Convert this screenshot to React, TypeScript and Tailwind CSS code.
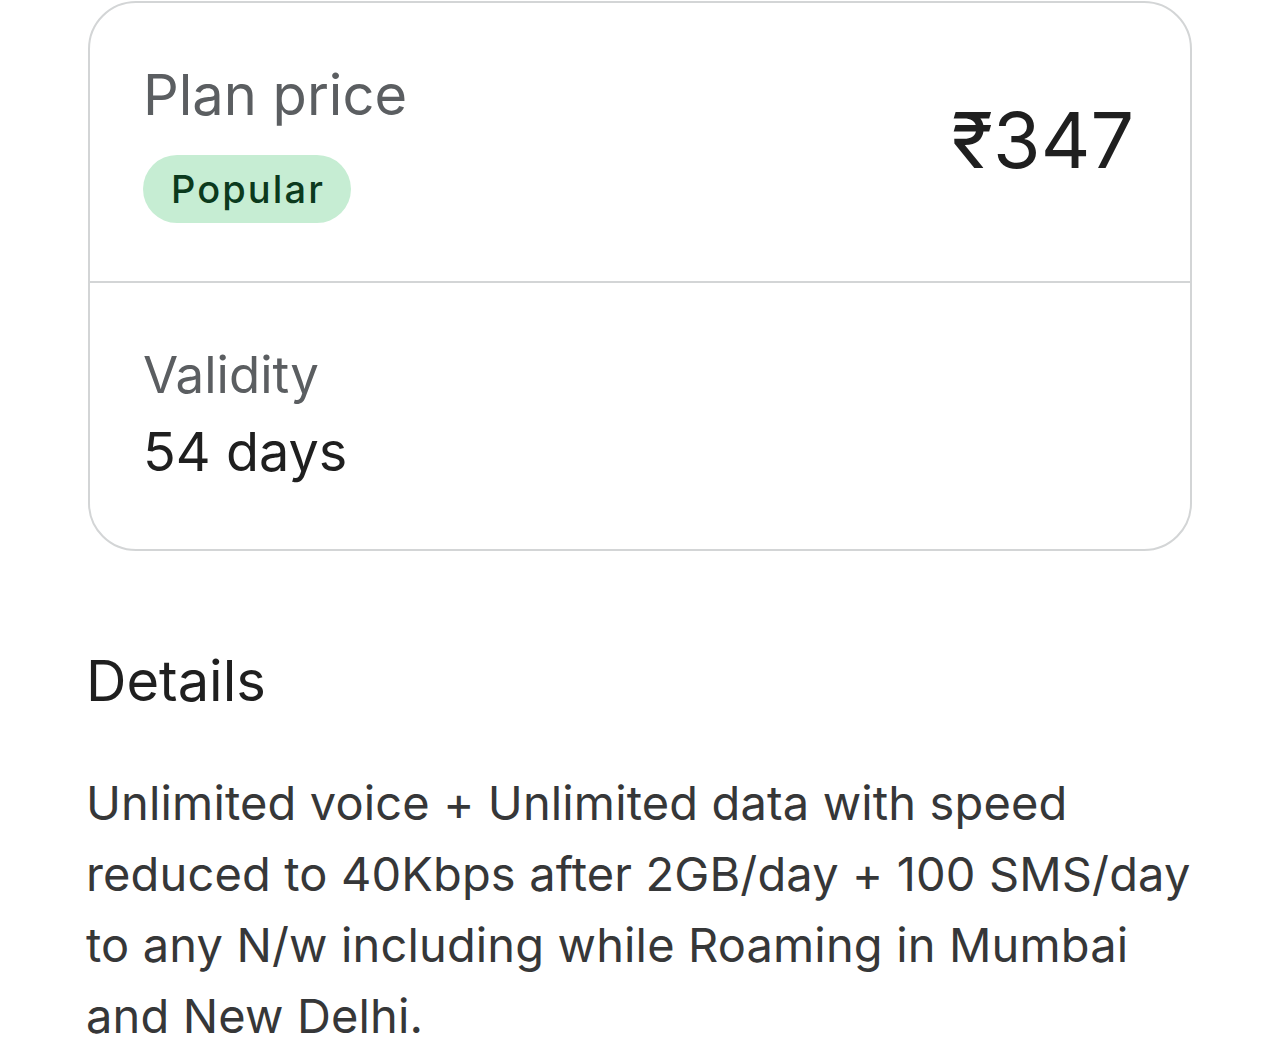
export default function App() {
  return (
    <div className="h-[1050px] overflow-hidden bg-white px-[88px] pt-px" style={{ fontFamily: 'Inter, Roboto, sans-serif' }}>
      {/* Plan card */}
      <div className="rounded-[48px] border-2 border-[#d3d5d6] overflow-hidden">
        <div className="flex justify-between h-[278px] pl-[53px] pr-[56px]">
          <div className="pt-[60px]">
            <div className="text-[56px] leading-[64px] text-[#5b5e61]">Plan price</div>
            <div className="mt-[28px] inline-flex items-center h-[68px] pl-[28px] pr-[26px] rounded-full bg-[#c6edd3] text-[38px] tracking-[0.055em] font-medium text-[#0b3a1d]">
              Popular
            </div>
          </div>
          <div className="pt-[99px] text-[77px] leading-[77px] text-[#1f1f1f]">₹347</div>
        </div>
        <div className="border-t-2 border-[#d3d5d6] h-[268px] pl-[53px] pt-[62px]">
          <div className="text-[51px] leading-[60px] text-[#5b5e61]">Validity</div>
          <div className="mt-[15px] text-[54px] leading-[64px] text-[#1f1f1f]">54 days</div>
        </div>
      </div>

      {/* Details */}
      <div className="-ml-[2px] mt-[98px] text-[56px] leading-[64px] text-[#1f1f1f]">Details</div>
      <p className="-ml-[2px] mt-[54px] whitespace-nowrap text-[47px] tracking-[0.003em] leading-[71px] text-[#363738]">
        Unlimited voice + Unlimited data with speed
        <br />
        reduced to 40Kbps after 2GB/day + 100 SMS/day
        <br />
        to any N/w including while Roaming in Mumbai
        <br />
        and New Delhi.
      </p>
    </div>
  );
}
